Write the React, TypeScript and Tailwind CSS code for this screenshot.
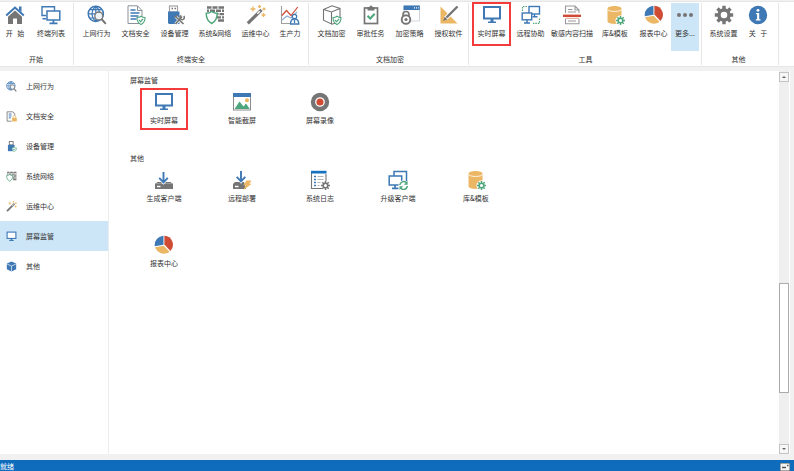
import React, { useState } from "react";

const BLUE = "#3e78b5";
const GRAY = "#757575";
const GREEN = "#4ea67c";
const RED = "#cf4b33";
const GOLD = "#ebb765";

type IconProps = { className?: string };

const Svg: React.FC<{ className?: string; children: React.ReactNode }> = ({
  className = "size-5",
  children,
}) => (
  <svg viewBox="0 0 20 20" fill="none" aria-hidden="true" className={`shrink-0 ${className}`}>
    {children}
  </svg>
);

// small badges that sit in the lower right corner of several icons
const ShieldBadge = () => (
  <path
    d="M15 11.200c1.300 1 2.600 1.300 4 1.300 0 3.400-1.100 5.600-4 7-2.900-1.400-4-3.600-4-7 1.400 0 2.700-.3 4-1.300zM13 15l1.600 1.700 2.600-2.900"
    fill="#fff"
    stroke={GREEN}
    strokeWidth="1.100"
  />
);

const GearBadge = ({ color }: { color: string }) => (
  <g stroke={color}>
    <path
      d="M15.500 11v9M11 15.500h9M12.300 12.300l6.400 6.400M18.700 12.300l-6.400 6.400"
      strokeWidth="1.500"
    />
    <circle cx="15.500" cy="15.500" r="2.300" fill="#fff" strokeWidth="1.500" />
  </g>
);

const HomeIcon = ({ className }: IconProps) => (
  <Svg className={className}>
    <path d="M14 1.500h2.500V7L14 5z" fill={BLUE} />
    <path d="M1.200 10.500 10 2.500l8.800 8" stroke={BLUE} strokeWidth="2" />
    <path d="M10 5.500l7 6.200V19h-5v-5.500H8V19H3v-7.300z" fill={GRAY} />
  </Svg>
);

const TerminalsIcon = ({ className }: IconProps) => (
  <Svg className={className}>
    <path d="M5 10.500H1V1.700h12.500v4M1.500 13.700H5" stroke={BLUE} strokeWidth="1.400" />
    <rect x="6" y="6" width="12.800" height="9" fill="#fff" stroke={BLUE} strokeWidth="1.500" />
    <path d="M12.400 15v3M8.500 18.400h8" stroke={BLUE} strokeWidth="1.700" />
  </Svg>
);

const WebIcon = ({ className }: IconProps) => (
  <Svg className={className}>
    <circle cx="8.800" cy="8.800" r="7.600" stroke={BLUE} strokeWidth="1.500" />
    <path
      d="M1.500 8.800h15M2.800 4.700h12M2.800 13h12M8.800 1.200v15.200M8.800 1.200c-5 4-5 11 0 15.200M8.800 1.200c5 4 5 11 0 15.200"
      stroke={BLUE}
      strokeWidth="1.200"
    />
    <circle cx="11.800" cy="11" r="4" fill="#eef3f8" stroke={GRAY} strokeWidth="1.300" />
    <path d="M14.500 14l4.300 4.800" stroke={GRAY} strokeWidth="2" />
  </Svg>
);

const DocShieldIcon = ({ className }: IconProps) => (
  <Svg className={className}>
    <path d="M2 .8h9.500L16 5.500V18.500H2zM11.500 1v4.500H16" stroke="#8b929a" strokeWidth="1" />
    <path d="M4.500 5h5M4.500 8h9M4.500 11h8M4.500 14h6" stroke={BLUE} strokeWidth="1.300" />
    <ShieldBadge />
  </Svg>
);

const DocLockIcon = ({ className }: IconProps) => (
  <Svg className={className}>
    <path d="M10 18.500H2V1.500h10.500l3.500 4v3" stroke={GRAY} strokeWidth="1.500" />
    <path d="M5 5.500h5M5 9h5M5 12.500h4" stroke={BLUE} strokeWidth="1.800" />
    <path d="M13 13v-2.500a2.300 2.300 0 0 1 4.600 0V13" stroke={GOLD} strokeWidth="1.400" />
    <rect x="11" y="12.500" width="8.600" height="6.500" fill={GOLD} />
  </Svg>
);

const UsbIcon = ({ className }: IconProps) => (
  <Svg className={className}>
    <rect x="4.500" y="1" width="8" height="6" stroke="#a3a3a3" strokeWidth="1.200" />
    <path d="M6.500 3.500H8M9.500 3.500H11" stroke={GRAY} strokeWidth="1.300" />
    <path d="M3 6.500h11.500v12.500H4l-1-1z" fill={BLUE} />
    <path d="M10.500 11.500l8 7.500M17.500 11.500l-7 7.500" stroke="#fff" strokeWidth="3" />
    <path d="M10.500 11.500l8 7.500M17 11.500l-6.500 7.500" stroke={GRAY} strokeWidth="1.700" />
    <path d="M9.500 12.500l3-2.500M18.800 11a2.200 2.200 0 1 1-2.500-.6" stroke={GRAY} strokeWidth="1.500" />
  </Svg>
);

const UsbShieldIcon = ({ className }: IconProps) => (
  <Svg className={className}>
    <rect x="6" y="1" width="7" height="6" stroke={GRAY} strokeWidth="1.600" />
    <path d="M3.500 7h12v11.500h-12z" fill={BLUE} />
    <ShieldBadge />
  </Svg>
);

const FirewallIcon = ({ className }: IconProps) => (
  <Svg className={className}>
    <path
      d="M2 2.500h4.500M7.500 2.500h5M13.500 2.500H19M2 5.800h2M5 5.800h5M11 5.800h5M17 5.800h2M9 9.100h4.500M14.500 9.100H19M12 12.400h4M17 12.400h2M13 15.500h6"
      stroke={GRAY}
      strokeWidth="2.400"
    />
    <path
      d="M6.700 6.500c1.600 1.300 3.400 1.800 5.500 1.800 0 5-1.500 8.200-5.500 10.200-4-2-5.500-5.200-5.500-10.200 2.100 0 3.900-.5 5.500-1.800z"
      fill="#fff"
      stroke={GREEN}
      strokeWidth="1.400"
    />
  </Svg>
);

const WandIcon = ({ className }: IconProps) => (
  <Svg className={className}>
    <path d="M1.800 18.300 15.500 4.800" stroke={GRAY} strokeWidth="3.200" />
    <path d="M11.300 8.800l2.500-2.500" stroke="#fff" strokeWidth="1.400" />
    <path
      d="M7 1.500v5M4.500 4h5M13.500 0v3M12 1.500h3M17.500 8v4M15.500 10h4M18 2.500v3M16.500 4h3"
      stroke={GOLD}
      strokeWidth="1.400"
    />
  </Svg>
);

const ProductivityIcon = ({ className }: IconProps) => (
  <Svg className={className}>
    <path d="M1.500 1v17.500H19" stroke="#a0a0a0" strokeWidth="1.100" />
    <path d="M2 15l5-4 4 2 6-6" stroke="#8fb0d3" strokeWidth="1.100" />
    <path d="M2 10.500l4.500-5 4.500 5L17.800 2" stroke={RED} strokeWidth="1.200" />
    <circle cx="14.500" cy="11.500" r="2.200" fill="#fff" stroke={BLUE} strokeWidth="1.200" />
    <path d="M10.500 19c0-3.500 1.500-5 4-5s4.300 1.500 4.300 5z" fill="#fff" stroke={BLUE} strokeWidth="1.300" />
    <path d="M14.500 15v3" stroke={BLUE} strokeWidth="1.300" />
  </Svg>
);

const BoxShieldIcon = ({ className }: IconProps) => (
  <Svg className={className}>
    <path
      d="M1.500 4.500 10 .8l8 2.700v13l-8 2.700-8.500-4zM1.500 4.500 9.500 7l8.500-3.500M9.500 7v12"
      stroke={GRAY}
      strokeWidth="1.100"
    />
    <ShieldBadge />
  </Svg>
);

const ClipboardIcon = ({ className }: IconProps) => (
  <Svg className={className}>
    <rect x="3.500" y="3" width="13" height="15.500" stroke={GRAY} strokeWidth="1.700" />
    <path d="M6.500 2h2a1.500 1.500 0 0 1 3 0h2v3.500h-7z" fill={GRAY} />
    <path d="M6.500 10.800l2.700 2.700 4.500-4.800" stroke={GREEN} strokeWidth="2" />
  </Svg>
);

const PolicyIcon = ({ className }: IconProps) => (
  <Svg className={className}>
    <path d="M4 1h15.500v15H4z" fill="#fff" stroke="#c4ccd4" strokeWidth=".8" />
    <path d="M3.500.5h16.300V5H3.500z" fill={BLUE} />
    <path d="M14 2.800h1M16 2.800h1M18 2.800h.8" stroke="#fff" strokeWidth="1.200" />
    <path d="M3 12V9.500a3 3 0 0 1 6 0V12" stroke={GRAY} strokeWidth="1.600" />
    <circle cx="6" cy="14.500" r="4.300" fill="#fff" stroke={GRAY} strokeWidth="1.900" />
    <circle cx="6" cy="14.500" r="1.600" fill={GRAY} />
  </Svg>
);

const DesignIcon = ({ className }: IconProps) => (
  <Svg className={className}>
    <path d="M1.500 1.500l17 17h-17z" fill={GOLD} />
    <path d="M6.500 13.500 18 2" stroke="#fff" strokeWidth="4" />
    <path d="M7.500 12.500 18.500 1.500" stroke={GRAY} strokeWidth="2.400" />
    <path d="M4 16l1.800-4.300 2.700 2.600z" fill={GRAY} />
  </Svg>
);

const ScreenIcon = ({ className }: IconProps) => (
  <Svg className={className}>
    <rect x="2" y="2" width="16" height="11.500" fill="#fff" stroke={BLUE} strokeWidth="2" />
    <path d="M8.500 14h3v2.500H14V18H6v-1.500h2.500z" fill={BLUE} />
  </Svg>
);

const RemoteIcon = ({ className }: IconProps) => (
  <Svg className={className}>
    <rect x="8" y="1.500" width="10.500" height="7.500" stroke={BLUE} strokeWidth="1.400" />
    <path d="M13.500 9v2.500M11.500 11.800h5" stroke={BLUE} strokeWidth="1.400" />
    <rect x="1.200" y="8" width="9.500" height="6.800" fill="#fff" stroke={BLUE} strokeWidth="1.400" />
    <path d="M6 15v2.500M3 18h6" stroke={BLUE} strokeWidth="1.500" />
    <path d="M1.500 6V1.500H6M18.500 13.500v4.800H12" stroke={GREEN} strokeWidth="1.200" strokeDasharray="1.500 1" />
  </Svg>
);

const ScanIcon = ({ className }: IconProps) => (
  <Svg className={className}>
    <path d="M3.500 8V1H13l4 4v3M13 1v4h4M3.500 14v4.800H17V14" stroke="#999" strokeWidth="1.100" />
    <path d="M6 4.500h4.500M6 7h8M6 16h8" stroke="#999" strokeWidth="1.200" />
    <path d="M1 10.800h18" stroke={RED} strokeWidth="2.400" />
    <path d="M3.500 13.300h13.500" stroke="#e0a093" strokeWidth="1" />
  </Svg>
);

const DatabaseIcon = ({ className }: IconProps) => (
  <Svg className={className}>
    <path d="M2.500 3.800C2.500.2 16.500.2 16.500 3.800v12.500c0 3.500-14 3.500-14 0z" fill={GOLD} />
    <path d="M2.500 4.200c0 3 14 3 14 0" stroke="#fdf3e0" strokeWidth="1" />
    <circle cx="15.500" cy="15.500" r="5" fill="#fff" />
    <GearBadge color={GREEN} />
  </Svg>
);

const PieIcon = ({ className }: IconProps) => (
  <Svg className={className}>
    <path d="M10.400 9.600V.7a9 9 0 0 1 6 15.200z" fill={RED} />
    <path d="M9.500 9.700V.7a9.200 9.200 0 0 0-8.700 10.500z" fill={BLUE} />
    <path d="M9.700 10.700l5.800 6A9.200 9.200 0 0 1 1.100 12.200z" fill={GOLD} />
  </Svg>
);

const MoreIcon = ({ className }: IconProps) => (
  <Svg className={className}>
    <circle cx="4" cy="10" r="2" fill={GRAY} />
    <circle cx="10" cy="10" r="2" fill={GRAY} />
    <circle cx="16" cy="10" r="2" fill={GRAY} />
  </Svg>
);

const SettingsIcon = ({ className }: IconProps) => (
  <Svg className={className}>
    <path
      d="M10 .8v18.400M.8 10h18.400M3.500 3.500l13 13M16.500 3.500l-13 13"
      stroke={GRAY}
      strokeWidth="3.400"
    />
    <circle cx="10" cy="10" r="5" fill="#fff" stroke={GRAY} strokeWidth="3.400" />
  </Svg>
);

const AboutIcon = ({ className }: IconProps) => (
  <Svg className={className}>
    <circle cx="10" cy="10" r="9.200" fill={BLUE} />
    <circle cx="10" cy="5.300" r="1.400" fill="#fff" />
    <path d="M8 8h3.200v6.200H12.500v1.300H7.800v-1.300h1.300V9.300H8z" fill="#fff" />
  </Svg>
);

const CubeIcon = ({ className }: IconProps) => (
  <Svg className={className}>
    <path d="M10 .8l8.500 3.800v10.200L10 19.200l-8.500-4.400V4.600z" fill={BLUE} />
    <path d="M2 5.500l8 3.700 8-3.700M10 9.200v9.300" stroke="#fff" strokeWidth="1.200" />
  </Svg>
);

const SnapshotIcon = ({ className }: IconProps) => (
  <Svg className={className}>
    <rect x="1.500" y="1.500" width="17" height="16.500" stroke="#8c8c8c" strokeWidth="1" />
    <path d="M1 1h18v4H1z" fill={BLUE} />
    <circle cx="15" cy="8.300" r="2" fill={GOLD} />
    <path d="M2.500 17l5-7.500 4 5 2.500-3 3.800 5.500z" fill={GREEN} />
  </Svg>
);

const RecordIcon = ({ className }: IconProps) => (
  <Svg className={className}>
    <circle cx="10" cy="10" r="9.200" fill={GRAY} />
    <circle cx="10" cy="10" r="4.200" fill={RED} stroke="#fff" strokeWidth="1.300" />
  </Svg>
);

const InstallerIcon = ({ className }: IconProps) => (
  <Svg className={className}>
    <path d="M3.500 12h13l2.500 2v5H1v-5z" fill={GRAY} />
    <path d="M1 13.500h18" stroke="#a5a5a5" strokeWidth=".8" />
    <path d="M3 16.500h3.500" stroke="#fff" strokeWidth="1.400" />
    <path d="M9.500 4v8M6.500 9l3 3.300L12.500 9" stroke="#fff" strokeWidth="3.400" />
    <path d="M9.500 2v10M5.200 7.800l4.300 4.500 4.300-4.500" stroke={BLUE} strokeWidth="1.900" />
  </Svg>
);

const DeployIcon = ({ className }: IconProps) => (
  <Svg className={className}>
    <path d="M3 12h9l2 7H1v-5z" fill={GRAY} />
    <path d="M3 16.500h3.500" stroke="#fff" strokeWidth="1.400" />
    <path d="M9 3v8M6 8l3 3.300L12 8" stroke="#fff" strokeWidth="3.400" />
    <path d="M9 1v10M4.700 6.800l4.300 4.500 4.300-4.500" stroke={BLUE} strokeWidth="1.900" />
    <path d="M14.500 10.500h5l-2 3.200h2.300L11.500 20l2-4.800h-2.200z" fill={GOLD} />
  </Svg>
);

const LogIcon = ({ className }: IconProps) => (
  <Svg className={className}>
    <path d="M1.500 2v16.500H12M16 4v7" stroke={GRAY} strokeWidth="1.100" />
    <path d="M1 .8h15.500v2.700H1z" fill="#1570bd" />
    <path d="M4 6.500h2M4 9.500h2M4 12.500h2M4 15.500h2" stroke={BLUE} strokeWidth="1.300" />
    <path d="M7.500 6.500h6M7.500 9.500h6M7.500 12.500h3M7.500 15.500h2" stroke="#b5b5b5" strokeWidth="1.100" />
    <GearBadge color={GRAY} />
  </Svg>
);

const UpgradeIcon = ({ className }: IconProps) => (
  <Svg className={className}>
    <path d="M6 6V1.500h12.500v10" stroke={BLUE} strokeWidth="1.500" />
    <rect x="1.200" y="6" width="12.500" height="9" fill="#fff" stroke={BLUE} strokeWidth="1.500" />
    <path d="M7 15v3M4 18.300h6.500" stroke={BLUE} strokeWidth="1.700" />
    <circle cx="15.500" cy="15.500" r="5" fill="#fff" />
    <path
      d="M11.800 15a3.800 3.800 0 0 1 6.500-2.200M19.300 16a3.800 3.800 0 0 1-6.500 2.300"
      stroke={GREEN}
      strokeWidth="1.500"
    />
    <path d="M19.600 11v3.800h-3.800zM11.500 20v-3.800h3.800z" fill={GREEN} />
  </Svg>
);

type Tool = {
  label: string;
  icon: React.FC<IconProps>;
  width?: string;
  marked?: boolean;
};

const ribbon: { title: string; className: string; tools: Tool[] }[] = [
  {
    title: "开始",
    className: "pr-px",
    tools: [
      { label: "开\u00a0\u00a0\u00a0始", icon: HomeIcon, width: "w-[30px]" },
      { label: "终端列表", icon: TerminalsIcon, width: "w-[42px]" },
    ],
  },
  {
    title: "终端安全",
    className: "px-[3px]",
    tools: [
      { label: "上网行为", icon: WebIcon, width: "w-[39px]" },
      { label: "文档安全", icon: DocShieldIcon, width: "w-[39px]" },
      { label: "设备管理", icon: UsbIcon, width: "w-[39px]" },
      { label: "系统&网络", icon: FirewallIcon, width: "w-[42px]" },
      { label: "运维中心", icon: WandIcon, width: "w-[39px]" },
      { label: "生产力", icon: ProductivityIcon, width: "w-[30px]" },
    ],
  },
  {
    title: "文档加密",
    className: "pl-[3px]",
    tools: [
      { label: "文档加密", icon: BoxShieldIcon, width: "w-[39px]" },
      { label: "审批任务", icon: ClipboardIcon, width: "w-[39px]" },
      { label: "加密策略", icon: PolicyIcon, width: "w-[39px]" },
      { label: "授权软件", icon: DesignIcon, width: "w-[39px]" },
    ],
  },
  {
    title: "工具",
    className: "pl-[3px] pr-0.5",
    tools: [
      { label: "实时屏幕", icon: ScreenIcon, width: "w-[39px]", marked: true },
      { label: "远程协助", icon: RemoteIcon, width: "w-[39px]" },
      { label: "敏感内容扫描", icon: ScanIcon, width: "w-11" },
      { label: "库&模板", icon: DatabaseIcon, width: "w-[42px]" },
      { label: "报表中心", icon: PieIcon, width: "w-[35px]" },
      { label: "更多...", icon: MoreIcon, width: "w-7" },
    ],
  },
  {
    title: "其他",
    className: "pl-0.5 pr-[5px]",
    tools: [
      { label: "系统设置", icon: SettingsIcon, width: "w-[39px]" },
      { label: "关\u00a0\u00a0\u00a0于", icon: AboutIcon, width: "w-[30px]" },
    ],
  },
];

const menu: Tool[] = [
  { label: "上网行为", icon: WebIcon },
  { label: "文档安全", icon: DocLockIcon },
  { label: "设备管理", icon: UsbShieldIcon },
  { label: "系统网络", icon: FirewallIcon },
  { label: "运维中心", icon: WandIcon },
  { label: "屏幕监管", icon: ScreenIcon },
  { label: "其他", icon: CubeIcon },
];

const sections: { title: string; tools: Tool[] }[] = [
  {
    title: "屏幕监管",
    tools: [
      { label: "实时屏幕", icon: ScreenIcon, marked: true },
      { label: "智能截屏", icon: SnapshotIcon },
      { label: "屏幕录像", icon: RecordIcon },
    ],
  },
  {
    title: "其他",
    tools: [
      { label: "生成客户端", icon: InstallerIcon },
      { label: "远程部署", icon: DeployIcon },
      { label: "系统日志", icon: LogIcon },
      { label: "升级客户端", icon: UpgradeIcon },
      { label: "库&模板", icon: DatabaseIcon },
      { label: "报表中心", icon: PieIcon },
    ],
  },
];

const Ribbon: React.FC = () => (
  <header className="mt-px flex border-y border-[#e6e6e6] bg-white py-px">
    {ribbon.map((group) => (
      <section
        key={group.title}
        className={`flex shrink-0 flex-col border-r border-[#e6e6e6] ${group.className}`}
      >
        <div className="flex">
          {group.tools.map(({ label, icon: Icon, width, marked }) => (
            <button
              key={label}
              type="button"
              className={`relative flex h-12 flex-col items-center gap-0.5 pt-0.5 ${width} ${
                label === "更多..." ? "bg-[#cde6f7]" : ""
              }`}
            >
              <Icon />
              <span className="whitespace-nowrap">{label}</span>
              {marked && <span className="absolute inset-x-0 -top-px h-11 border-2 border-[#f43b3b]" />}
            </button>
          ))}
        </div>
        <h2 className="pt-0.5 text-center">{group.title}</h2>
      </section>
    ))}
  </header>
);

const ScrollBar: React.FC = () => (
  <div className="flex w-[10px] shrink-0 flex-col bg-[#efefef] pt-px" aria-hidden="true">
    <div className="flex h-[10px] items-center justify-center border border-[#c3c3c3] bg-[#f7f7f7]">
      <svg viewBox="0 0 4 2" className="h-0.5 w-1">
        <path d="M2 0l2 2H0z" fill="#666" />
      </svg>
    </div>
    <div className="grow-[203]" />
    <div className="grow-[109] border border-[#ababab] bg-white" />
    <div className="grow-[51]" />
    <div className="flex h-[10px] items-center justify-center border border-[#c3c3c3] bg-[#f7f7f7]">
      <svg viewBox="0 0 4 2" className="h-0.5 w-1">
        <path d="M0 0h4L2 2z" fill="#666" />
      </svg>
    </div>
  </div>
);

const App: React.FC = () => {
  const [active, setActive] = useState("屏幕监管");

  return (
    <div
      lang="zh-CN"
      className="flex h-screen flex-col overflow-hidden bg-[#f1f1f1] font-['Noto_Sans_CJK_SC',sans-serif] text-[7px] leading-[12px] text-[#333]"
    >
      <Ribbon />

      <div className="mt-1 mr-1 mb-[6px] flex min-h-0 flex-1 border-r border-white bg-white">
        <nav className="flex w-[109px] shrink-0 flex-col border-r border-[#ececec]">
          {menu.map(({ label, icon: Icon }) => (
            <button
              key={label}
              type="button"
              onClick={() => setActive(label)}
              className={`flex h-[30px] items-center gap-[9px] pl-[6px] ${
                active === label ? "bg-[#cde6f7]" : ""
              }`}
            >
              <Icon className="size-[11px]" />
              <span>{label}</span>
            </button>
          ))}
        </nav>

        <main className="flex min-w-0 flex-1 flex-col gap-[5px] pt-[3px] pl-4">
          {sections.map((section) => (
            <section key={section.title}>
              <h2 className="pl-[5px]">{section.title}</h2>
              <div className="mt-[6px] flex max-w-[390px] flex-wrap gap-y-[10px]">
                {section.tools.map(({ label, icon: Icon, marked }) => (
                  <div key={label} className="flex h-[55px] w-[78px] justify-center">
                    <button type="button" className="relative flex w-12 flex-col items-center gap-0.5">
                      <Icon />
                      <span className="whitespace-nowrap">{label}</span>
                      {marked && (
                        <span className="absolute inset-x-0 -top-1 h-[42px] border-2 border-[#f43b3b]" />
                      )}
                    </button>
                  </div>
                ))}
              </div>
            </section>
          ))}
        </main>

        <ScrollBar />
      </div>

      <footer className="flex h-[11px] shrink-0 items-end justify-between bg-[#0f6cbd] pr-1 text-white">
        <span className="leading-[10px]">就绪</span>
        <svg viewBox="0 0 10 8" className="h-2 w-[10px]" aria-hidden="true">
          <path d="M0 0h10v8H0z" fill="#f4f4f4" stroke="#555" />
          <path d="M2 4.500h4M7 2.500h1.500" stroke="#555" strokeWidth="1.500" />
        </svg>
      </footer>
    </div>
  );
};

export default App;
